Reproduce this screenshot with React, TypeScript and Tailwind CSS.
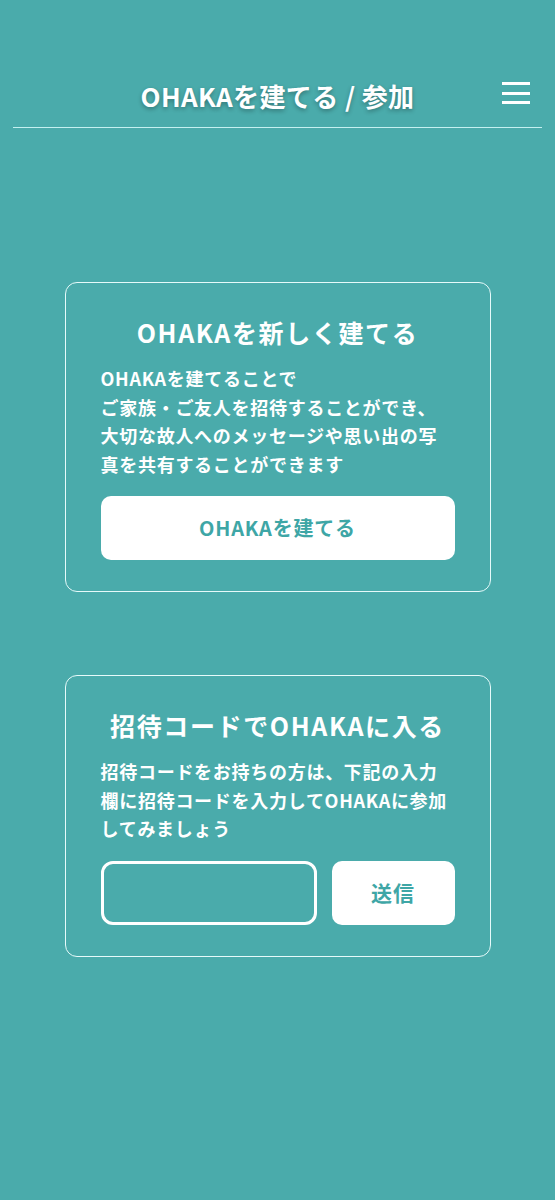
import React from "react";

export default function App() {
  return (
    <div
      className="min-h-[1200px] w-full bg-[#4aabab] text-white"
      style={{ fontFamily: '"Noto Sans CJK JP", "Noto Sans", sans-serif' }}
    >
      <header className="relative mx-[13px] flex h-[128px] items-end justify-center border-b border-[#c4f0f0] pb-[13px]">
        <h1 className="text-[26px] font-bold leading-[36px] tracking-[0.015em] [text-shadow:0_2px_4px_rgba(0,0,0,0.3)]">
          OHAKAを建てる / 参加
        </h1>
        <button className="absolute right-[12px] top-[82px] flex w-[28px] flex-col gap-[6.5px]">
          <span className="block h-[3px] w-[28px] bg-white" />
          <span className="block h-[3px] w-[28px] bg-white" />
          <span className="block h-[3px] w-[28px] bg-white" />
        </button>
      </header>

      <main className="flex flex-col items-center pt-[154px]">
        <section className="w-[426px] rounded-[12px] border border-[#e6fafa] px-[35px] pb-[31px] pt-[31px]">
          <h2 className="text-center text-[25px] font-bold leading-[36px] tracking-[0.065em]">
            OHAKAを新しく建てる
          </h2>
          <p className="mt-[14px] whitespace-nowrap text-[18px] font-bold leading-[28.5px] tracking-[0.04em]">
            OHAKAを建てることで
            <br />
            ご家族・ご友人を招待することができ、
            <br />
            大切な故人へのメッセージや思い出の写
            <br />
            真を共有することができます
          </p>
          <button className="mt-[18px] flex h-[64px] w-full items-center justify-center rounded-[10px] bg-white text-[20px] font-bold tracking-[0.04em] text-[#3ea6a6]">
            OHAKAを建てる
          </button>
        </section>

        <section className="mt-[83px] w-[426px] rounded-[12px] border border-[#e6fafa] px-[35px] pb-[31px] pt-[31px]">
          <h2 className="text-center text-[25px] font-bold leading-[36px] tracking-[0.065em]">
            招待コードでOHAKAに入る
          </h2>
          <p className="mt-[14px] whitespace-nowrap text-[18px] font-bold leading-[28.5px] tracking-[0.04em]">
            招待コードをお持ちの方は、下記の入力
            <br />
            欄に招待コードを入力してOHAKAに参加
            <br />
            してみましょう
          </p>
          <div className="mt-[18px] flex gap-[15px]">
            <input
              type="text"
              className="h-[64px] w-[216px] rounded-[12px] border-[3px] border-white bg-transparent px-3 text-white outline-none"
            />
            <button className="flex h-[64px] flex-1 items-center justify-center rounded-[10px] bg-white text-[21px] font-bold tracking-[0.05em] text-[#3ea6a6]">
              送信
            </button>
          </div>
        </section>
      </main>
    </div>
  );
}
